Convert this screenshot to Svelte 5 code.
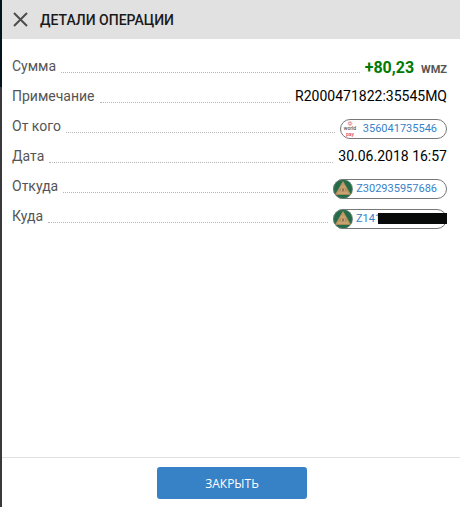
<script lang="ts">
  type Row = {
    label: string;
    kind: 'amount' | 'text' | 'purse';
    value: string;
    currency?: string;
    icon?: 'worldpay' | 'wmz';
    masked?: boolean;
  };

  const rows: Row[] = [
    { label: 'Сумма', kind: 'amount', value: '+80,23', currency: 'WMZ' },
    { label: 'Примечание', kind: 'text', value: 'R2000471822:35545MQ' },
    { label: 'От кого', kind: 'purse', value: '356041735546', icon: 'worldpay' },
    { label: 'Дата', kind: 'text', value: '30.06.2018 16:57' },
    { label: 'Откуда', kind: 'purse', value: 'Z302935957686', icon: 'wmz' },
    { label: 'Куда', kind: 'purse', value: 'Z141', icon: 'wmz', masked: true },
  ];

  let { onclose = () => {} }: { onclose?: () => void } = $props();
</script>

<div class="dialog">
  <header class="header">
    <button class="cross" aria-label="Закрыть окно" onclick={onclose}>
      <svg width="15" height="15" viewBox="0 0 15 15" aria-hidden="true">
        <path d="M1 1l13 13M14 1L1 14" stroke="#4d4d4d" stroke-width="2" fill="none" />
      </svg>
    </button>
    <h1>ДЕТАЛИ ОПЕРАЦИИ</h1>
  </header>

  <dl class="details">
    {#each rows as row}
      <div class="row">
        <dt>{row.label}</dt>
        <span class="dots"></span>
        <dd class={row.kind}>
          {#if row.kind === 'amount'}
            <span class="sum">{row.value}</span>
            <span class="currency">{row.currency}</span>
          {:else if row.kind === 'purse'}
            <a class="pill" class:masked={row.masked} href="#purse">
              {#if row.icon === 'worldpay'}
                <svg class="icon" viewBox="0 0 20 20" aria-hidden="true">
                  <g fill="none" stroke="#e88f94">
                    <circle cx="10" cy="4.5" r="1.2" />
                    <circle cx="10" cy="4.5" r="2" stroke-dasharray="1 .6" />
                  </g>
                  <text x="10" y="11" fill="#55555a" text-anchor="middle">world</text>
                  <text x="10" y="17" fill="#e0484f" text-anchor="middle">pay</text>
                </svg>
              {:else}
                <svg class="icon" viewBox="0 0 20 20" aria-hidden="true">
                  <circle cx="10" cy="10" r="9.5" fill="#246b49" stroke="#6f8278" stroke-width=".8" />
                  <path d="M10 2.5L17.5 15.5h-15z" fill="#c19a68" stroke="#b58d5c" stroke-width=".8" />
                  <path d="M7.5 8h5M5 14h10" stroke="#d3b180" stroke-width=".8" />
                  <path d="M6.5 11.2Q10 8 13.5 11.2Q10 13.8 6.5 11.2z" fill="#e2c698" stroke="#94714a" stroke-width=".6" />
                  <circle cx="10" cy="11" r="1" fill="#76583a" />
                </svg>
              {/if}
              <span>{row.value}</span>
              {#if row.masked}
                <span class="mask"></span>
              {/if}
            </a>
          {:else}
            {row.value}
          {/if}
        </dd>
      </div>
    {/each}
  </dl>

  <footer class="footer">
    <button class="btn" onclick={onclose}>ЗАКРЫТЬ</button>
  </footer>
</div>

<style>
  :global(body) {
    margin: 0;
    background: linear-gradient(#04141d 87px, #39393b 87px);
  }

  .dialog {
    display: flex;
    flex-direction: column;
    min-height: 100vh;
    margin-left: 2px;
    background: #fff;
    font-family: Roboto, 'Liberation Sans', sans-serif;
    font-size: 14px;
  }

  .header {
    display: flex;
    align-items: center;
    gap: 12px;
    height: 39px;
    padding-left: 11px;
    background: #e1e1e1;
  }
  .header h1 {
    margin: 0;
    font-size: 14px;
    font-weight: 500;
    color: #1a1a1a;
  }

  .cross {
    display: flex;
    padding: 0;
    border: none;
    background: none;
    cursor: pointer;
  }

  .details {
    flex: 1;
    margin: 0;
    padding: 12px 13px 0 10px;
  }

  .row {
    display: flex;
    height: 30px;
    line-height: 30px;
  }
  .row dt {
    color: #555;
  }
  .row dd {
    display: flex;
    align-items: center;
    margin: 0;
    color: #000;
  }
  .row .amount {
    align-items: baseline;
    line-height: 34px;
  }

  .dots {
    flex: 1;
    height: 20px;
    margin: 0 5px;
    border-bottom: 1px dotted #b5b5b5;
    padding-top: 1px;
  }

  .sum {
    font-size: 16px;
    font-weight: 700;
    color: #007a00;
  }
  .currency {
    margin-left: 7px;
    font-size: 11px;
    font-weight: 700;
    color: #555;
  }

  .pill {
    position: relative;
    display: flex;
    align-items: center;
    gap: 3px;
    box-sizing: border-box;
    height: 20px;
    margin-top: 6px;
    padding-right: 9px;
    border: 1px solid #777;
    border-radius: 10px;
    font-size: 11px;
    line-height: 18px;
    color: #3782c8;
    text-decoration: none;
  }
  .pill.masked {
    width: 114px;
  }

  .icon {
    width: 20px;
    height: 20px;
    margin-left: -1px;
  }
  .icon text {
    font-size: 5px;
    font-weight: 500;
  }

  .mask {
    position: absolute;
    top: 3px;
    right: -1px;
    width: 69px;
    height: 11px;
    background: #080a0a;
  }

  .footer {
    display: flex;
    justify-content: center;
    padding: 9px 0 8px 2px;
    border-top: 1px solid #e1e1e1;
  }

  .btn {
    width: 150px;
    height: 32px;
    border: none;
    border-radius: 3px;
    background: #3782c6;
    color: #fff;
    font-family: 'Open Sans', 'Noto Sans', sans-serif;
    font-size: 12px;
    cursor: pointer;
  }
  .btn:hover {
    background: #2f74b2;
  }
</style>
